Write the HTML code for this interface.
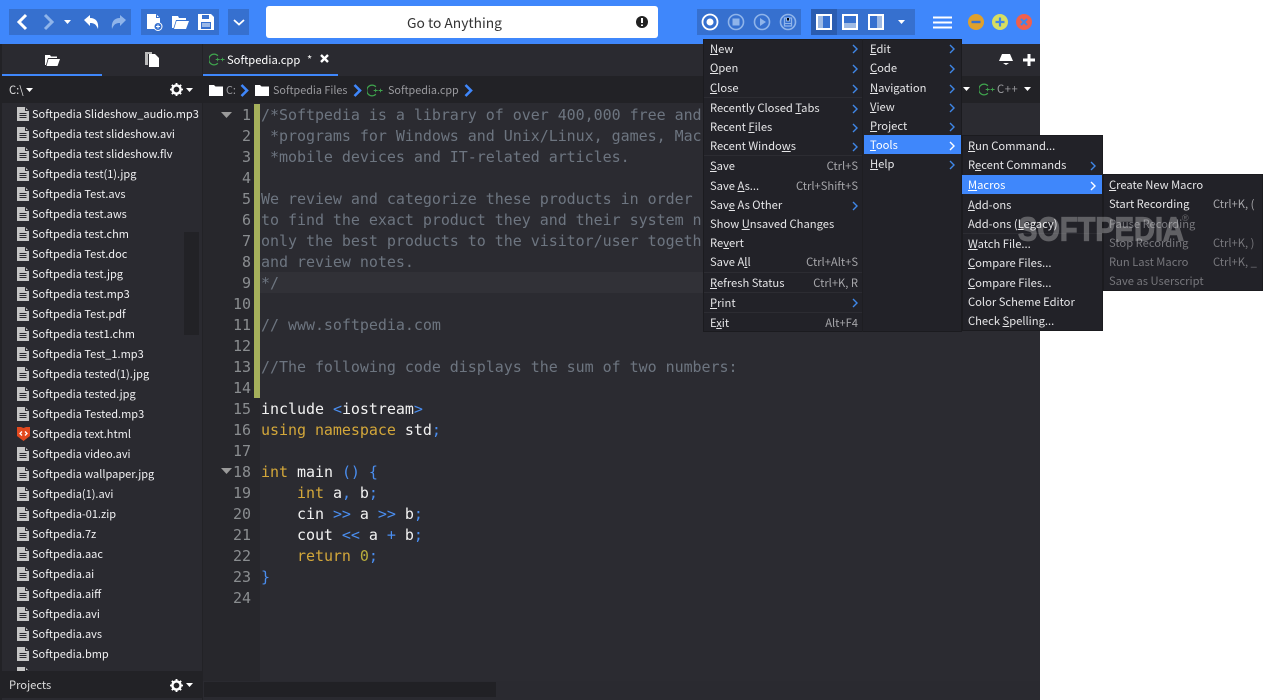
<!DOCTYPE html>
<html><head><meta charset="utf-8"><style>
*{margin:0;padding:0;box-sizing:border-box}
html,body{width:1263px;height:700px;overflow:hidden;background:#fff}
body{position:relative;font-family:"Noto Sans CJK JP","Liberation Sans",sans-serif;font-size:11.2px;color:#e8e8ea}
div,svg,span.a{position:absolute}
.g{background:#3670cf;top:9px;height:26px}
.t{white-space:pre;height:20px;line-height:21px}
.f{left:32px;color:#f0f0f2;font-size:11px}
.fi{left:17px}
.c{font-family:"DejaVu Sans Mono","Liberation Mono",monospace;font-size:15px;letter-spacing:-.04px;left:261px;height:21px;line-height:23px;white-space:pre;color:#f2f2f2}
.n{font-family:"DejaVu Sans Mono","Liberation Mono",monospace;font-size:15px;left:213px;width:38px;text-align:right;height:21px;line-height:23px;color:#8a8d90}
.cm{color:#6d7580}.k{color:#d3a73a}.b{color:#4a8ef0}.y{color:#b8ad3c}
.m{background:#222228;border:1px solid #1b1b1f}
.i{white-space:pre;height:20px;line-height:20px;color:#e6e6e8}
.s{white-space:pre;height:20px;line-height:20px;color:#a6a6aa;text-align:right}
.d{color:#77777c}
.sep{background:#2c2c32;height:1px}
.h{background:#3f87fb}
.ar{width:6px;height:10px}
</style></head><body>
<svg width="0" height="0" style="position:absolute"><defs>
<symbol id="file" viewBox="0 0 12 14"><path d="M0 0H8L12 4V14H0Z" fill="#c6c6c6"/><path d="M8.5 0.5V3.5H11.5" fill="none" stroke="#2a2a30"/><path d="M2.5 6.5H9.5M2.5 8.5H9.5M2.5 10.5H9.5" stroke="#2a2a30" stroke-width="1"/></symbol>
<symbol id="arr" viewBox="0 0 6 10"><path d="M1 1L5 5L1 9" fill="none" stroke="#3f87e8" stroke-width="1.4"/></symbol>
<symbol id="arw" viewBox="0 0 6 10"><path d="M1 1L5 5L1 9" fill="none" stroke="#fff" stroke-width="1.4"/></symbol>
<symbol id="folder" viewBox="0 0 14 12"><path d="M0 1H5L6.5 2.5H14V12H0Z" fill="#fff"/></symbol>
<symbol id="crumb" viewBox="0 0 9 13"><path d="M1.5 1L7 6.5L1.5 12" fill="none" stroke="#3f87fb" stroke-width="2.6"/></symbol>
<symbol id="cpp" viewBox="0 0 18 14"><path d="M10 2.8A6 6 0 1 0 10 11.2" fill="none" stroke="#3fa34d" stroke-width="1.4"/><path d="M7.5 7H12M9.7 5V9M13 7H17.5M15.2 5V9" stroke="#3fa34d" stroke-width="1"/></symbol>
<symbol id="gear" viewBox="0 0 14 14"><circle cx="7" cy="7" r="4.4" fill="none" stroke="#fff" stroke-width="2.6"/><path d="M7 0V3M7 11V14M0 7H3M11 7H14M2 2L4 4M10 10L12 12M12 2L10 4M4 10L2 12" stroke="#fff" stroke-width="2"/></symbol>
<symbol id="tri" viewBox="0 0 7 4"><path d="M0 0H7L3.5 4Z" fill="#fff"/></symbol>
</defs></svg>

<!-- window -->
<div style="left:0;top:0;width:1040px;height:700px;background:#2a2a30"></div>
<div style="left:0;top:0;width:1040px;height:44px;background:#3f87fb"></div>

<!-- toolbar groups -->
<div class="g" style="left:9px;width:122px"></div>
<div class="g" style="left:141px;width:78px"></div>
<div class="g" style="left:228px;width:21px"></div>
<div class="g" style="left:697px;width:104px"></div>
<div class="g" style="left:811px;width:104px"></div>
<div style="left:811px;top:9px;width:26px;height:26px;background:#2a5cb0"></div>

<svg style="left:16px;top:13px" width="12" height="18"><path d="M10 2L3 9L10 16" fill="none" stroke="#fff" stroke-width="3"/></svg>
<svg style="left:43px;top:13px" width="12" height="18"><path d="M2 2L9 9L2 16" fill="none" stroke="#8fb4ea" stroke-width="3"/></svg>
<svg style="left:64px;top:20px" width="8" height="5"><use href="#tri" width="7" height="4"/></svg>
<svg style="left:84px;top:14px" width="16" height="16"><path d="M0 6L6 1V4C12 4 15 8 14 15C12 10 10 9 6 9V12Z" fill="#fff"/></svg>
<svg style="left:110px;top:14px" width="16" height="16"><path d="M16 6L10 1V4C4 4 1 8 2 15C4 10 6 9 10 9V12Z" fill="#8fb4ea"/></svg>

<svg style="left:147px;top:14px" width="16" height="17"><path d="M0 0H9L13 4V15H0Z" fill="#fff"/><path d="M9.5 .5V3.5H12.5" stroke="#3670cf" fill="none"/><circle cx="11" cy="12.5" r="4" fill="#3670cf" stroke="#fff"/><path d="M9 12.5H13M11 10.5V14.5" stroke="#fff"/></svg>
<svg style="left:172px;top:15px" width="17" height="14"><path d="M0 1H6L7 3H14V5H4L1.5 13H0Z" fill="#fff"/><path d="M4.5 6H17L14 14H2Z" fill="#fff"/></svg>
<svg style="left:198px;top:14px" width="16" height="16"><path d="M0 0H13L16 3V16H0Z" fill="#fff"/><path d="M4 1H11V5H4Z" fill="#3670cf"/><path d="M3 8H13V15H3Z" fill="#3670cf"/><path d="M4 10H12M4 12H12" stroke="#fff"/></svg>
<svg style="left:233px;top:19px" width="12" height="7"><path d="M1 1L6 5.5L11 1" fill="none" stroke="#fff" stroke-width="1.8"/></svg>

<div style="left:266px;top:6px;width:392px;height:32px;background:#fff;border-radius:3px"></div>
<div class="t" style="left:407px;top:12px;color:#333;font-size:13.8px">Go to Anything</div>
<svg style="left:636px;top:16px" width="12" height="12"><circle cx="6" cy="6" r="6" fill="#222"/><path d="M6 2V7M6 8.5V10" stroke="#fff" stroke-width="2"/></svg>

<svg style="left:701px;top:13px" width="18" height="18"><circle cx="9" cy="9" r="7.5" fill="none" stroke="#fff" stroke-width="1.8"/><circle cx="9" cy="9" r="3.5" fill="#fff"/></svg>
<svg style="left:727px;top:13px" width="18" height="18"><circle cx="9" cy="9" r="7.5" fill="none" stroke="#8fb4ea" stroke-width="1.6"/><rect x="5.5" y="5.5" width="7" height="7" fill="#8fb4ea"/></svg>
<svg style="left:753px;top:13px" width="18" height="18"><circle cx="9" cy="9" r="7.5" fill="none" stroke="#8fb4ea" stroke-width="1.6"/><path d="M7 5L13 9L7 13Z" fill="#8fb4ea"/></svg>
<svg style="left:779px;top:13px" width="18" height="18"><circle cx="9" cy="9" r="7.5" fill="none" stroke="#8fb4ea" stroke-width="1.6"/><path d="M5.5 5H12.5V13H5.5Z" fill="none" stroke="#8fb4ea" stroke-width="1.3"/><path d="M7.5 5V8H10.5V5M6 10.5H12" stroke="#8fb4ea"/></svg>

<svg style="left:816px;top:14px" width="16" height="16"><rect x="1" y="1" width="14" height="14" fill="#3670cf" stroke="#fff" stroke-width="2"/><rect x="2" y="2" width="5" height="12" fill="#9db9e4"/></svg>
<svg style="left:842px;top:14px" width="16" height="16"><rect x="1" y="1" width="14" height="14" fill="#3670cf" stroke="#fff" stroke-width="2"/><rect x="2" y="9" width="12" height="5" fill="#9db9e4"/></svg>
<svg style="left:868px;top:14px" width="16" height="16"><rect x="1" y="1" width="14" height="14" fill="#3670cf" stroke="#fff" stroke-width="2"/><rect x="9" y="2" width="5" height="12" fill="#9db9e4"/></svg>
<svg style="left:898px;top:20px" width="8" height="5"><use href="#tri" width="7" height="4"/></svg>

<svg style="left:933px;top:16px" width="20" height="15"><path d="M0 1.5H19M0 6.5H19M0 11.5H19" stroke="#fff" stroke-width="2"/></svg>
<svg style="left:968px;top:14px" width="16" height="16"><circle cx="8" cy="8" r="8" fill="#dfa02c"/><path d="M3.5 8H12.5" stroke="#3670cf" stroke-width="2.4"/></svg>
<svg style="left:992px;top:14px" width="16" height="16"><circle cx="8" cy="8" r="8" fill="#d6de62"/><path d="M3.5 8H12.5M8 3.5V12.5" stroke="#3f87e8" stroke-width="2.2"/></svg>
<svg style="left:1016px;top:14px" width="16" height="16"><circle cx="8" cy="8" r="8" fill="#f0604c"/><path d="M5 5L11 11M11 5L5 11" stroke="#3f87e8" stroke-width="2.2"/></svg>

<!-- sidebar -->
<div style="left:0;top:44px;width:2px;height:656px;background:#222226"></div>
<div style="left:202px;top:44px;width:1px;height:656px;background:#222226"></div>
<div style="left:2px;top:74px;width:100px;height:2px;background:#3f87fb"></div>
<svg style="left:45px;top:54px" width="15" height="12"><path d="M0 1H5L6 2.5H12V4H3L1 11H0Z" fill="#fff"/><path d="M3.5 5H15L12.5 12H1.5Z" fill="#fff"/></svg>
<svg style="left:145px;top:52px" width="14" height="15"><path d="M0 0H7V2H3V13H0Z" fill="#bbb"/><path d="M4 2H10L14 6V15H4Z" fill="#fff"/></svg>
<div style="left:2px;top:76px;width:200px;height:27px;background:#222226"></div>
<div class="t" style="left:9px;top:80px;color:#ddd">C:\</div>
<svg style="left:26px;top:88px" width="8" height="5"><use href="#tri" width="7" height="4"/></svg>
<svg style="left:170px;top:83px" width="13" height="13"><use href="#gear" width="13" height="13"/></svg>
<svg style="left:186px;top:88px" width="8" height="5"><use href="#tri" width="7" height="4"/></svg>

<div style="left:184px;top:232px;width:15px;height:103px;background:#222226"></div>

<svg class="fi" style="top:107px" width="12" height="14"><use href="#file"/></svg><div class="t f" style="top:104px">Softpedia Slideshow_audio.mp3</div>
<svg class="fi" style="top:127px" width="12" height="14"><use href="#file"/></svg><div class="t f" style="top:124px">Softpedia test slideshow.avi</div>
<svg class="fi" style="top:147px" width="12" height="14"><use href="#file"/></svg><div class="t f" style="top:144px">Softpedia test slideshow.flv</div>
<svg class="fi" style="top:167px" width="12" height="14"><use href="#file"/></svg><div class="t f" style="top:164px">Softpedia test(1).jpg</div>
<svg class="fi" style="top:187px" width="12" height="14"><use href="#file"/></svg><div class="t f" style="top:184px">Softpedia Test.avs</div>
<svg class="fi" style="top:207px" width="12" height="14"><use href="#file"/></svg><div class="t f" style="top:204px">Softpedia test.aws</div>
<svg class="fi" style="top:227px" width="12" height="14"><use href="#file"/></svg><div class="t f" style="top:224px">Softpedia test.chm</div>
<svg class="fi" style="top:247px" width="12" height="14"><use href="#file"/></svg><div class="t f" style="top:244px">Softpedia Test.doc</div>
<svg class="fi" style="top:267px" width="12" height="14"><use href="#file"/></svg><div class="t f" style="top:264px">Softpedia test.jpg</div>
<svg class="fi" style="top:287px" width="12" height="14"><use href="#file"/></svg><div class="t f" style="top:284px">Softpedia test.mp3</div>
<svg class="fi" style="top:307px" width="12" height="14"><use href="#file"/></svg><div class="t f" style="top:304px">Softpedia Test.pdf</div>
<svg class="fi" style="top:327px" width="12" height="14"><use href="#file"/></svg><div class="t f" style="top:324px">Softpedia test1.chm</div>
<svg class="fi" style="top:347px" width="12" height="14"><use href="#file"/></svg><div class="t f" style="top:344px">Softpedia Test_1.mp3</div>
<svg class="fi" style="top:367px" width="12" height="14"><use href="#file"/></svg><div class="t f" style="top:364px">Softpedia tested(1).jpg</div>
<svg class="fi" style="top:387px" width="12" height="14"><use href="#file"/></svg><div class="t f" style="top:384px">Softpedia tested.jpg</div>
<svg class="fi" style="top:407px" width="12" height="14"><use href="#file"/></svg><div class="t f" style="top:404px">Softpedia Tested.mp3</div>
<svg style="left:17px;top:427px" width="13" height="14"><path d="M0 0H4L6.5 1L9 0H13V9L6.5 14L0 9Z" fill="#e2491f"/><path d="M5 4.5L3 6.5L5 8.5M8 4.5L10 6.5L8 8.5" fill="none" stroke="#fff" stroke-width="1.3"/></svg><div class="t f" style="top:424px">Softpedia text.html</div>
<svg class="fi" style="top:447px" width="12" height="14"><use href="#file"/></svg><div class="t f" style="top:444px">Softpedia video.avi</div>
<svg class="fi" style="top:467px" width="12" height="14"><use href="#file"/></svg><div class="t f" style="top:464px">Softpedia wallpaper.jpg</div>
<svg class="fi" style="top:487px" width="12" height="14"><use href="#file"/></svg><div class="t f" style="top:484px">Softpedia(1).avi</div>
<svg class="fi" style="top:507px" width="12" height="14"><use href="#file"/></svg><div class="t f" style="top:504px">Softpedia-01.zip</div>
<svg class="fi" style="top:527px" width="12" height="14"><use href="#file"/></svg><div class="t f" style="top:524px">Softpedia.7z</div>
<svg class="fi" style="top:547px" width="12" height="14"><use href="#file"/></svg><div class="t f" style="top:544px">Softpedia.aac</div>
<svg class="fi" style="top:567px" width="12" height="14"><use href="#file"/></svg><div class="t f" style="top:564px">Softpedia.ai</div>
<svg class="fi" style="top:587px" width="12" height="14"><use href="#file"/></svg><div class="t f" style="top:584px">Softpedia.aiff</div>
<svg class="fi" style="top:607px" width="12" height="14"><use href="#file"/></svg><div class="t f" style="top:604px">Softpedia.avi</div>
<svg class="fi" style="top:627px" width="12" height="14"><use href="#file"/></svg><div class="t f" style="top:624px">Softpedia.avs</div>
<svg class="fi" style="top:647px" width="12" height="14"><use href="#file"/></svg><div class="t f" style="top:644px">Softpedia.bmp</div>
<svg class="fi" style="top:667px" width="12" height="14"><use href="#file"/></svg>

<div style="left:0;top:671px;width:202px;height:27px;background:#222226"></div>
<div class="t" style="left:9px;top:675px;color:#ddd">Projects</div>
<svg style="left:170px;top:679px" width="13" height="13"><use href="#gear" width="13" height="13"/></svg>
<svg style="left:186px;top:683px" width="8" height="5"><use href="#tri" width="7" height="4"/></svg>

<!-- tabs -->
<svg style="left:209px;top:53px" width="16" height="13"><use href="#cpp" width="16" height="13"/></svg>
<div class="t" style="left:227px;top:50px;color:#fff">Softpedia.cpp</div>
<div class="t" style="left:307px;top:50px;color:#eee">*</div>
<svg style="left:320px;top:54px" width="9" height="9"><path d="M1 1L8 8M8 1L1 8" stroke="#fff" stroke-width="2.4"/></svg>
<div style="left:203px;top:74px;width:135px;height:2px;background:#3f87fb"></div>
<svg style="left:999px;top:53px" width="15" height="13"><path d="M3 1H11L14 8H0Z" fill="#fff"/><path d="M4 10H10L7 12Z" fill="#fff"/></svg>
<svg style="left:1023px;top:54px" width="12" height="12"><path d="M6 0V12M0 6H12" stroke="#fff" stroke-width="3"/></svg>

<!-- breadcrumb -->
<div style="left:203px;top:76px;width:837px;height:27px;background:#222226"></div>
<svg style="left:209px;top:84px" width="14" height="12"><use href="#folder"/></svg>
<div class="t" style="left:226px;top:80px;color:#9a9a9e;font-size:10.8px">C:</div>
<svg style="left:240px;top:84px" width="9" height="13"><use href="#crumb"/></svg>
<svg style="left:255px;top:84px" width="14" height="12"><use href="#folder"/></svg>
<div class="t" style="left:273px;top:80px;color:#9a9a9e;font-size:10.8px">Softpedia Files</div>
<svg style="left:353px;top:84px" width="9" height="13"><use href="#crumb"/></svg>
<svg style="left:367px;top:84px" width="16" height="13"><use href="#cpp" width="16" height="13"/></svg>
<div class="t" style="left:388px;top:80px;color:#9a9a9e;font-size:10.8px">Softpedia.cpp</div>
<svg style="left:464px;top:84px" width="9" height="13"><use href="#crumb"/></svg>
<svg style="left:963px;top:87px" width="8" height="5"><use href="#tri" width="7" height="4"/></svg>
<svg style="left:979px;top:83px" width="16" height="13"><use href="#cpp" width="16" height="13"/></svg>
<div class="t" style="left:997px;top:79px;color:#9a9a9e;letter-spacing:.6px">C++</div>
<svg style="left:1024px;top:87px" width="8" height="5"><use href="#tri" width="7" height="4"/></svg>

<!-- editor -->
<div style="left:203px;top:103px;width:57px;height:578px;background:#27272c"></div>
<div style="left:260px;top:103px;width:780px;height:578px;background:#2b2b31"></div>
<div style="left:254px;top:104px;width:6px;height:294px;background:#a5b05b"></div>
<div style="left:260px;top:272px;width:780px;height:21px;background:#313137"></div>
<svg style="left:221px;top:112px" width="11" height="7"><path d="M0 0H11L5.5 6Z" fill="#9a9a9a"/></svg>
<svg style="left:221px;top:468px" width="11" height="7"><path d="M0 0H11L5.5 6Z" fill="#9a9a9a"/></svg>

<div class="n" style="top:104px">1</div><div class="n" style="top:125px">2</div><div class="n" style="top:146px">3</div><div class="n" style="top:167px">4</div><div class="n" style="top:188px">5</div><div class="n" style="top:209px">6</div><div class="n" style="top:230px">7</div><div class="n" style="top:251px">8</div><div class="n" style="top:272px">9</div><div class="n" style="top:293px">10</div><div class="n" style="top:314px">11</div><div class="n" style="top:335px">12</div><div class="n" style="top:356px">13</div><div class="n" style="top:377px">14</div><div class="n" style="top:398px">15</div><div class="n" style="top:419px">16</div><div class="n" style="top:440px">17</div><div class="n" style="top:461px">18</div><div class="n" style="top:482px">19</div><div class="n" style="top:503px">20</div><div class="n" style="top:524px">21</div><div class="n" style="top:545px">22</div><div class="n" style="top:566px">23</div><div class="n" style="top:587px">24</div>

<div class="c cm" style="top:104px">/*Softpedia is a library of over 400,000 free and</div>
<div class="c cm" style="top:125px"> *programs for Windows and Unix/Linux, games, Mac</div>
<div class="c cm" style="top:146px"> *mobile devices and IT-related articles.</div>
<div class="c cm" style="top:188px">We review and categorize these products in order</div>
<div class="c cm" style="top:209px">to find the exact product they and their system n</div>
<div class="c cm" style="top:230px">only the best products to the visitor/user togeth</div>
<div class="c cm" style="top:251px">and review notes.</div>
<div class="c cm" style="top:272px">*/</div>
<div class="c cm" style="top:314px">// www.softpedia.com</div>
<div class="c cm" style="top:356px">//The following code displays the sum of two numbers:</div>
<div class="c" style="top:398px">include <span class="b">&lt;</span>iostream<span class="b">&gt;</span></div>
<div class="c" style="top:419px"><span class="k">using namespace</span> std<span class="b">;</span></div>
<div class="c" style="top:461px"><span class="k">int</span> main <span class="b">()</span> <span class="b">{</span></div>
<div class="c" style="top:482px">    <span class="k">int</span> a<span class="b">,</span> b<span class="b">;</span></div>
<div class="c" style="top:503px">    cin <span class="b">&gt;&gt;</span> a <span class="b">&gt;&gt;</span> b<span class="b">;</span></div>
<div class="c" style="top:524px">    cout <span class="b">&lt;&lt;</span> a <span class="b">+</span> b<span class="b">;</span></div>
<div class="c" style="top:545px">    <span class="k">return</span> <span class="y">0</span><span class="b">;</span></div>
<div class="c" style="top:566px"><span class="b">}</span></div>

<!-- bottom scroll -->
<div style="left:204px;top:682px;width:292px;height:15px;background:#212125"></div>

<!-- menus -->
<div class="m" style="left:703px;top:39px;width:259px;height:293px"></div>
<div style="left:862px;top:39px;width:1px;height:293px;background:#1e1e22"></div>

<div class="i" style="left:710px;top:39px"><u>N</u>ew</div>
<div class="i" style="left:710px;top:58px"><u>O</u>pen</div>
<div class="i" style="left:710px;top:78px"><u>C</u>lose</div>
<div class="sep" style="left:704px;top:97px;width:158px"></div>
<div class="i" style="left:710px;top:98px">Recently Closed <u>T</u>abs</div>
<div class="i" style="left:710px;top:117px">Recent <u>F</u>iles</div>
<div class="i" style="left:710px;top:136px">Recent Windo<u>w</u>s</div>
<div class="sep" style="left:704px;top:155px;width:158px"></div>
<div class="i" style="left:710px;top:156px"><u>S</u>ave</div>
<div class="i" style="left:710px;top:176px">Save <u>A</u>s...</div>
<div class="i" style="left:710px;top:195px">Sav<u>e</u> As Other</div>
<div class="i" style="left:710px;top:214px">Show <u>U</u>nsaved Changes</div>
<div class="i" style="left:710px;top:233px">Re<u>v</u>ert</div>
<div class="i" style="left:710px;top:252px">Save A<u>l</u>l</div>
<div class="sep" style="left:704px;top:272px;width:158px"></div>
<div class="i" style="left:710px;top:273px"><u>R</u>efresh Status</div>
<div class="sep" style="left:704px;top:292px;width:158px"></div>
<div class="i" style="left:710px;top:293px"><u>P</u>rint</div>
<div class="sep" style="left:704px;top:312px;width:158px"></div>
<div class="i" style="left:710px;top:313px">E<u>x</u>it</div>
<div class="s" style="left:760px;width:98px;top:156px">Ctrl+S</div>
<div class="s" style="left:760px;width:98px;top:176px">Ctrl+Shift+S</div>
<div class="s" style="left:760px;width:98px;top:252px">Ctrl+Alt+S</div>
<div class="s" style="left:760px;width:98px;top:273px">Ctrl+K, R</div>
<div class="s" style="left:760px;width:98px;top:313px">Alt+F4</div>
<svg class="ar" style="left:852px;top:44px"><use href="#arr" width="6" height="10"/></svg>
<svg class="ar" style="left:852px;top:64px"><use href="#arr" width="6" height="10"/></svg>
<svg class="ar" style="left:852px;top:84px"><use href="#arr" width="6" height="10"/></svg>
<svg class="ar" style="left:852px;top:104px"><use href="#arr" width="6" height="10"/></svg>
<svg class="ar" style="left:852px;top:123px"><use href="#arr" width="6" height="10"/></svg>
<svg class="ar" style="left:852px;top:142px"><use href="#arr" width="6" height="10"/></svg>
<svg class="ar" style="left:852px;top:201px"><use href="#arr" width="6" height="10"/></svg>
<svg class="ar" style="left:852px;top:298px"><use href="#arr" width="6" height="10"/></svg>

<div class="h" style="left:864px;top:135px;width:97px;height:19px"></div>
<div class="i" style="left:870px;top:39px"><u>E</u>dit</div>
<div class="i" style="left:870px;top:58px"><u>C</u>ode</div>
<div class="i" style="left:870px;top:78px"><u>N</u>avigation</div>
<div class="i" style="left:870px;top:97px"><u>V</u>iew</div>
<div class="i" style="left:870px;top:116px"><u>P</u>roject</div>
<div class="i" style="left:870px;top:135px;color:#fff"><u>T</u>ools</div>
<div class="i" style="left:870px;top:154px"><u>H</u>elp</div>
<svg class="ar" style="left:949px;top:44px"><use href="#arr" width="6" height="10"/></svg>
<svg class="ar" style="left:949px;top:64px"><use href="#arr" width="6" height="10"/></svg>
<svg class="ar" style="left:949px;top:84px"><use href="#arr" width="6" height="10"/></svg>
<svg class="ar" style="left:949px;top:103px"><use href="#arr" width="6" height="10"/></svg>
<svg class="ar" style="left:949px;top:122px"><use href="#arr" width="6" height="10"/></svg>
<svg class="ar" style="left:949px;top:141px"><use href="#arw" width="6" height="10"/></svg>
<svg class="ar" style="left:949px;top:160px"><use href="#arr" width="6" height="10"/></svg>

<div class="m" style="left:962px;top:135px;width:141px;height:196px"></div>
<div class="h" style="left:962px;top:175px;width:140px;height:19px"></div>
<div class="i" style="left:968px;top:136px"><u>R</u>un Command...</div>
<div class="i" style="left:968px;top:155px">R<u>e</u>cent Commands</div>
<div class="i" style="left:968px;top:175px;color:#fff"><u>M</u>acros</div>
<div class="i" style="left:968px;top:195px"><u>A</u>dd-ons</div>
<div class="i" style="left:968px;top:214px">Add-ons (<u>L</u>egacy)</div>
<div class="sep" style="left:963px;top:233px;width:139px"></div>
<div class="i" style="left:968px;top:234px"><u>W</u>atch File...</div>
<div class="i" style="left:968px;top:253px"><u>C</u>ompare Files...</div>
<div class="i" style="left:968px;top:273px"><u>C</u>ompare Files...</div>
<div class="i" style="left:968px;top:292px">Color Scheme Editor</div>
<div class="i" style="left:968px;top:311px">Check <u>S</u>pelling...</div>
<svg class="ar" style="left:1090px;top:161px"><use href="#arr" width="6" height="10"/></svg>
<svg class="ar" style="left:1090px;top:181px"><use href="#arw" width="6" height="10"/></svg>

<div class="m" style="left:1103px;top:174px;width:160px;height:117px"></div>
<div class="i" style="left:1109px;top:175px"><u>C</u>reate New Macro</div>
<div class="i" style="left:1109px;top:194px">Start Recording</div>
<div class="i d" style="left:1109px;top:214px">Pause Recording</div>
<div class="i d" style="left:1109px;top:233px">Stop Recording</div>
<div class="i d" style="left:1109px;top:252px">Run Last Macro</div>
<div class="i d" style="left:1109px;top:271px">Save as Userscript</div>
<div class="s" style="left:1213px;top:194px">Ctrl+K, (</div>
<div class="s d" style="left:1213px;top:233px">Ctrl+K, )</div>
<div class="s d" style="left:1213px;top:252px">Ctrl+K, _</div>

<!-- watermark -->
<div style="left:1018px;top:212px;font-family:'Liberation Sans',sans-serif;font-weight:bold;font-size:29px;line-height:36px;color:#fff;opacity:.28;white-space:pre;-webkit-text-stroke:1px #fff;transform:scaleY(1.15)">SOFTPEDIA</div>
<div style="left:1182px;top:213px;font-family:'Liberation Sans',sans-serif;font-size:9px;line-height:10px;color:#fff;opacity:.3">®</div>
</body></html>
